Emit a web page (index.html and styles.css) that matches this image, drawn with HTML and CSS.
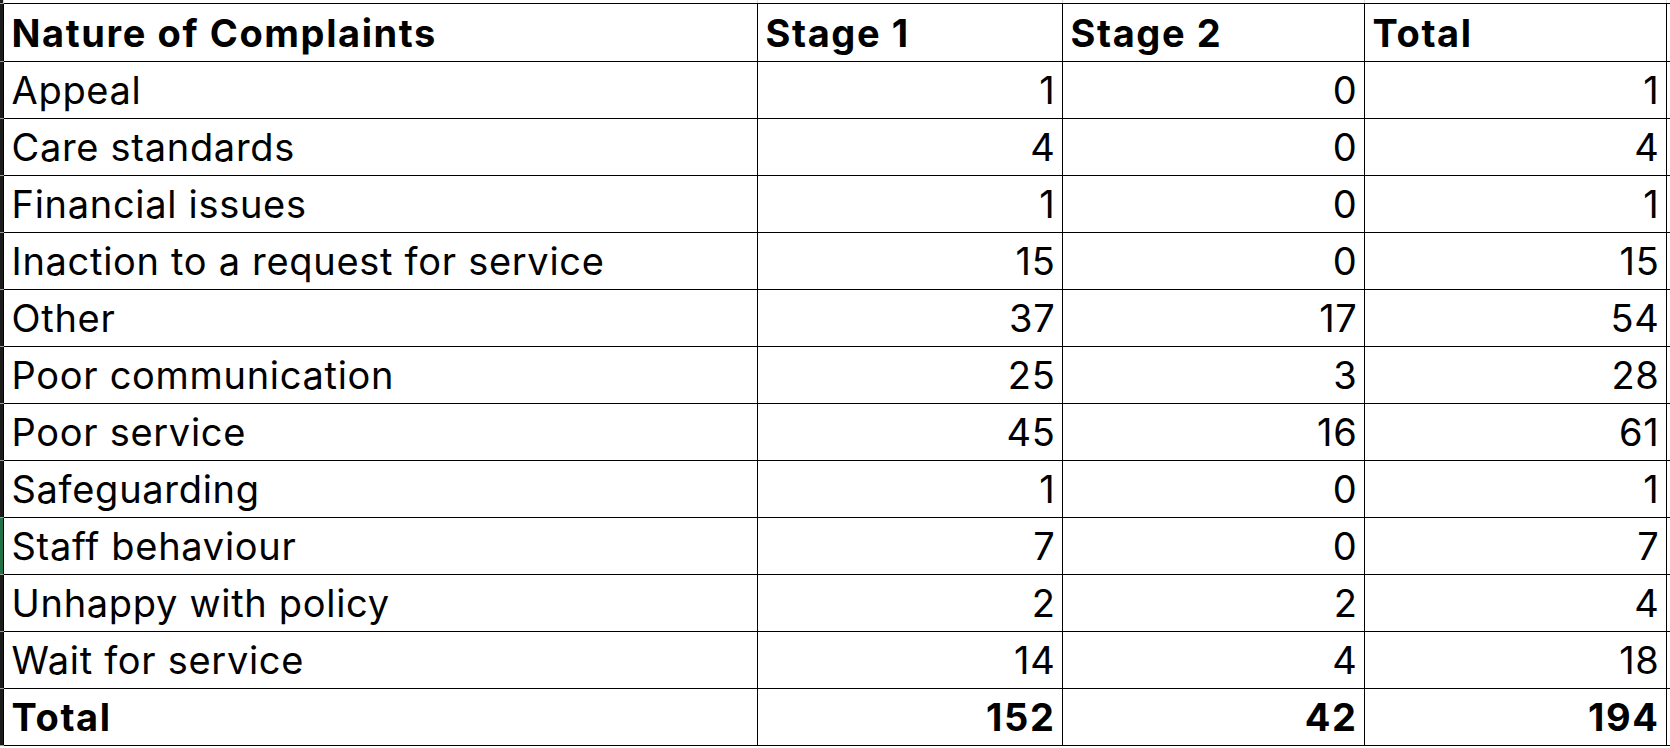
FILE: index.html
```html
<!DOCTYPE html>
<html lang="en">
<head>
<meta charset="utf-8">
<title>Nature of Complaints</title>
<link rel="stylesheet" href="styles.css">
</head>
<body>
<table class="sheet">
  <colgroup>
    <col class="c-hd">
    <col class="c-name">
    <col class="c-num">
    <col class="c-num2">
    <col class="c-num2">
    <col class="c-tail">
  </colgroup>
  <tbody>
    <tr class="pre"><td class="rh"></td><td></td><td></td><td></td><td></td><td class="tail"></td></tr>
    <tr class="head"><td class="rh"></td><td>Nature of Complaints</td><td>Stage 1</td><td>Stage 2</td><td>Total</td><td class="tail"></td></tr>
    <tr><td class="rh"></td><td>Appeal</td><td class="n">1</td><td class="n">0</td><td class="n">1</td><td class="tail"></td></tr>
    <tr><td class="rh"></td><td>Care standards</td><td class="n">4</td><td class="n">0</td><td class="n">4</td><td class="tail"></td></tr>
    <tr><td class="rh"></td><td>Financial issues</td><td class="n">1</td><td class="n">0</td><td class="n">1</td><td class="tail"></td></tr>
    <tr><td class="rh"></td><td>Inaction to a request for service</td><td class="n">15</td><td class="n">0</td><td class="n">15</td><td class="tail"></td></tr>
    <tr><td class="rh"></td><td>Other</td><td class="n">37</td><td class="n">17</td><td class="n">54</td><td class="tail"></td></tr>
    <tr><td class="rh"></td><td>Poor communication</td><td class="n">25</td><td class="n">3</td><td class="n">28</td><td class="tail"></td></tr>
    <tr><td class="rh"></td><td>Poor service</td><td class="n">45</td><td class="n">16</td><td class="n">61</td><td class="tail"></td></tr>
    <tr><td class="rh"></td><td>Safeguarding</td><td class="n">1</td><td class="n">0</td><td class="n">1</td><td class="tail"></td></tr>
    <tr><td class="rh sel"></td><td>Staff behaviour</td><td class="n">7</td><td class="n">0</td><td class="n">7</td><td class="tail"></td></tr>
    <tr><td class="rh"></td><td>Unhappy with policy</td><td class="n">2</td><td class="n">2</td><td class="n">4</td><td class="tail"></td></tr>
    <tr><td class="rh"></td><td>Wait for service</td><td class="n">14</td><td class="n">4</td><td class="n">18</td><td class="tail"></td></tr>
    <tr class="total"><td class="rh"></td><td>Total</td><td class="n">152</td><td class="n">42</td><td class="n">194</td><td class="tail"></td></tr>
  </tbody>
</table>
</body>
</html>
```

FILE: styles.css
```css
html, body {
  margin: 0;
  padding: 0;
  background: #ffffff;
}

body {
  width: 1670px;
  height: 748px;
  overflow: hidden;
  font-family: "Inter", "Liberation Sans", sans-serif;
  color: #000000;
}

.sheet {
  border-collapse: collapse;
  table-layout: fixed;
  width: 1671px;
}

.c-hd { width: 3px; }
.c-name { width: 754px; }
.c-num { width: 305px; }
.c-num2 { width: 302px; }
.c-tail { width: 8px; }

.sheet td {
  border: 1px solid #000000;
  height: 48px;
  padding: 0 6px 8px 8px;
  vertical-align: bottom;
  font-size: 38px;
  line-height: 40px;
  letter-spacing: 0.7px;
  white-space: nowrap;
  overflow: hidden;
}

.sheet td.n {
  text-align: right;
}

.sheet .pre td {
  height: 3px;
  padding: 0;
  border-top: none;
  border-left: 1px solid #dadada;
  border-right: 1px solid #dadada;
}

.sheet td.rh {
  padding: 0;
  background: #1c1c1c;
  border-left: none;
  border-top: 1px solid #9a9a9a;
  border-bottom: 1px solid #9a9a9a;
}

.sheet .pre td.rh {
  border-top: none;
}

.sheet td.rh.sel {
  background: #217346;
}

.sheet td.tail {
  padding: 0;
  border-right: none;
}

.sheet .head td {
  height: 49px;
}

.head td,
.total td {
  font-weight: 700;
  letter-spacing: 1.6px;
}
```
